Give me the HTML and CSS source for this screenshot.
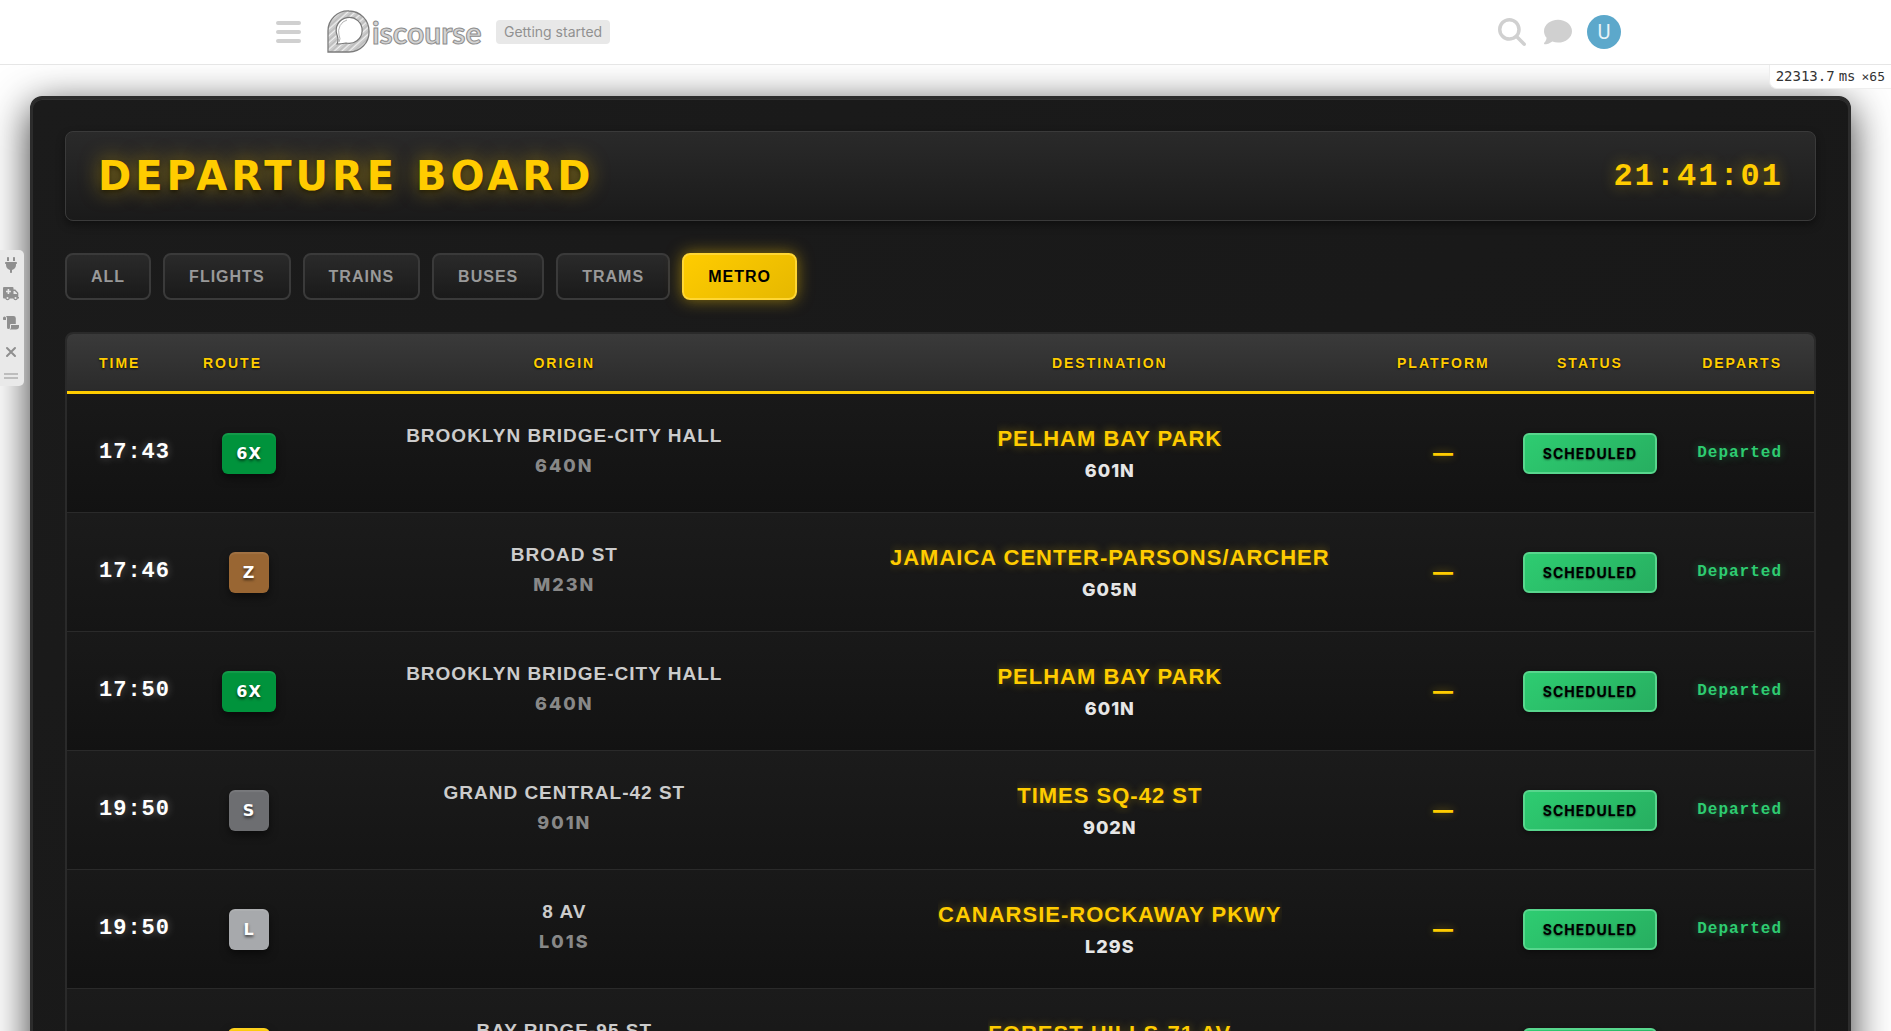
FILE: index.html
```html
<!DOCTYPE html>
<html lang="en">
<head>
<meta charset="utf-8">
<title>Departure Board</title>
<link rel="stylesheet" href="styles.css">
</head>
<body>
<header class="site-header">
  <div class="site-header-inner">
    <button class="icon-button menu-button" aria-label="Menu">
      <svg width="25" height="22" viewBox="0 0 25 22"><path d="M2 2h21M2 11h21M2 20h21" stroke="currentColor" stroke-width="4" stroke-linecap="round"/></svg>
    </button>
    <a class="logo" href="#" aria-label="Discourse">
      <svg width="156" height="44" viewBox="0 0 156 44">
        <defs>
          <pattern id="hatch" width="5" height="5" patternUnits="userSpaceOnUse" patternTransform="rotate(48)">
            <rect width="5" height="5" fill="#cbcbcb"/><rect width="1" height="5" fill="#f0f0f0"/><rect x="3" width="1" height="5" fill="#bababa"/>
          </pattern>
        </defs>
        <path d="M1 42V21A20 20 0 0 1 22 1A20 20 0 0 1 42 21A20 20 0 0 1 22 42Z" fill="url(#hatch)" stroke="#7b7b7b" stroke-width="1.3"/>
        <path d="M10 34Q12 30 10 25A13 13 0 1 1 19 33Q14 34 10 34Z" fill="#fff" stroke="#777" stroke-width="1.2"/>
        <path d="M12 32Q14 29 12 25A11 12 0 0 1 20 10" fill="none" stroke="#b5b5b5" stroke-width="1"/>
        <text x="45" y="34" class="logo-text">iscourse</text>
      </svg>
    </a>
    <a class="topic-tag" href="#">Getting started</a>
    <nav class="header-icons">
      <button class="icon-button" aria-label="Search">
        <svg width="28" height="28" viewBox="0 0 512 512"><path fill="currentColor" d="M416 208c0 45.9-14.9 88.3-40 122.7L502.6 457.4c12.5 12.5 12.5 32.8 0 45.3s-32.8 12.5-45.3 0L330.7 376c-34.4 25.2-76.8 40-122.7 40C93.1 416 0 322.9 0 208S93.1 0 208 0S416 93.1 416 208zM208 352a144 144 0 1 0 0-288 144 144 0 1 0 0 288z"/></svg>
      </button>
      <button class="icon-button" aria-label="Chat">
        <svg width="28" height="28" viewBox="0 0 512 512"><path fill="currentColor" d="M512 240c0 114.9-114.6 208-256 208c-37.1 0-72.3-6.4-104.1-17.9c-11.9 8.7-31.3 20.6-54.3 30.6C73.6 471.1 44.7 480 16 480c-6.5 0-12.3-3.9-14.8-9.9c-2.5-6-1.1-12.8 3.4-17.4l.3-.3c.3-.3 .7-.7 1.3-1.4c1.1-1.2 2.8-3.1 4.9-5.7c4.1-5 9.6-12.4 15.2-21.6c10-16.6 19.5-38.4 21.4-62.9C17.7 326.8 0 285.1 0 240C0 125.1 114.6 32 256 32s256 93.1 256 208z"/></svg>
      </button>
      <button class="avatar">U</button>
    </nav>
  </div>
</header>

<aside class="profiler"><span>22313.7</span><span class="profiler-unit">ms</span><span class="profiler-count">×65</span></aside>

<aside class="dev-tools">
  <button class="tool" aria-label="Plugins"><svg width="12" height="16" viewBox="0 0 384 512"><path fill="currentColor" d="M96 0C78.3 0 64 14.3 64 32v96h64V32c0-17.7-14.3-32-32-32zM288 0c-17.7 0-32 14.3-32 32v96h64V32c0-17.7-14.3-32-32-32zM32 160c-17.7 0-32 14.3-32 32s14.3 32 32 32v32c0 77.4 55 142 128 156.8V480c0 17.7 14.3 32 32 32s32-14.3 32-32V412.8C297 398 352 333.4 352 256V224c17.7 0 32-14.3 32-32s-14.3-32-32-32H32z"/></svg></button>
  <button class="tool" aria-label="Safe mode"><svg width="16" height="14" viewBox="0 0 16 14"><path fill="currentColor" fill-rule="evenodd" d="M1 0h8.5a1 1 0 0 1 1 1v1.5h1.8l3 3.2V10H16v1.5h-1.2a2.3 2.3 0 0 1-4.5 0H6.8a2.3 2.3 0 0 1-4.5 0H1a1 1 0 0 1-1-1V1a1 1 0 0 1 1-1zM4.6 2v1.7H3v1.6h1.6V7h1.6V5.300h1.700V3.700H6.200V2zM10.500 4v3h3.500V6.200L11.700 4zM4.500 10a1 1 0 1 0 .01 2 1 1 0 0 0 0-2zM12.500 10a1 1 0 1 0 .01 2 1 1 0 0 0 0-2z"/></svg></button>
  <button class="tool" aria-label="Verbose log"><svg width="16" height="14" viewBox="0 0 16 14"><path fill="currentColor" d="M0 2a1.500 1.500 0 0 1 3 0v2H.7Q0 4 0 3.300zM3 0h7.500a2.300 2.300 0 0 1 2.300 2.300V8H8a1 1 0 0 0-1 1v2.500a1.500 1.500 0 0 1-3 0V2.500Q4 1 3 0zM8 9h8v1.300A3 3 0 0 1 13 13.500H6.500Q8 13 8 11.500z"/></svg></button>
  <button class="tool" aria-label="Close"><svg width="12" height="12" viewBox="0 0 12 12"><path d="M2 2l8 8M10 2l-8 8" stroke="currentColor" stroke-width="2" stroke-linecap="round"/></svg></button>
  <div class="grip"></div>
</aside>

<main class="board">
  <section class="board-head">
    <h1 class="board-title">DEPARTURE BOARD</h1>
    <time class="clock">21:41:01</time>
  </section>

  <nav class="filters">
    <button class="filter">ALL</button>
    <button class="filter">FLIGHTS</button>
    <button class="filter">TRAINS</button>
    <button class="filter">BUSES</button>
    <button class="filter">TRAMS</button>
    <button class="filter filter-active">METRO</button>
  </nav>

  <div class="table-frame">
    <table class="departures">
      <colgroup><col class="col-time"><col class="col-route"><col class="col-origin"><col><col class="col-platform"><col class="col-status"><col class="col-departs"></colgroup>
      <thead>
        <tr><th class="time">TIME</th><th class="route-head">ROUTE</th><th>ORIGIN</th><th class="destination">DESTINATION</th><th>PLATFORM</th><th>STATUS</th><th class="departs">DEPARTS</th></tr>
      </thead>
      <tbody>
        <tr>
          <td class="time">17:43</td><td><span class="badge line-green">6X</span></td>
          <td><div class="stop"><span class="stop-name">BROOKLYN BRIDGE-CITY HALL</span><span class="stop-code">640N</span></div></td>
          <td class="destination"><div class="stop"><span class="stop-name">PELHAM BAY PARK</span><span class="stop-code">601N</span></div></td>
          <td class="platform">—</td><td class="status-cell"><span class="status">SCHEDULED</span></td><td class="departs">Departed</td>
        </tr>
        <tr>
          <td class="time">17:46</td><td><span class="badge line-brown">Z</span></td>
          <td><div class="stop"><span class="stop-name">BROAD ST</span><span class="stop-code">M23N</span></div></td>
          <td class="destination"><div class="stop"><span class="stop-name">JAMAICA CENTER-PARSONS/ARCHER</span><span class="stop-code">G05N</span></div></td>
          <td class="platform">—</td><td class="status-cell"><span class="status">SCHEDULED</span></td><td class="departs">Departed</td>
        </tr>
        <tr>
          <td class="time">17:50</td><td><span class="badge line-green">6X</span></td>
          <td><div class="stop"><span class="stop-name">BROOKLYN BRIDGE-CITY HALL</span><span class="stop-code">640N</span></div></td>
          <td class="destination"><div class="stop"><span class="stop-name">PELHAM BAY PARK</span><span class="stop-code">601N</span></div></td>
          <td class="platform">—</td><td class="status-cell"><span class="status">SCHEDULED</span></td><td class="departs">Departed</td>
        </tr>
        <tr>
          <td class="time">19:50</td><td><span class="badge line-dark">S</span></td>
          <td><div class="stop"><span class="stop-name">GRAND CENTRAL-42 ST</span><span class="stop-code">901N</span></div></td>
          <td class="destination"><div class="stop"><span class="stop-name">TIMES SQ-42 ST</span><span class="stop-code">902N</span></div></td>
          <td class="platform">—</td><td class="status-cell"><span class="status">SCHEDULED</span></td><td class="departs">Departed</td>
        </tr>
        <tr>
          <td class="time">19:50</td><td><span class="badge line-light">L</span></td>
          <td><div class="stop"><span class="stop-name">8 AV</span><span class="stop-code">L01S</span></div></td>
          <td class="destination"><div class="stop"><span class="stop-name">CANARSIE-ROCKAWAY PKWY</span><span class="stop-code">L29S</span></div></td>
          <td class="platform">—</td><td class="status-cell"><span class="status">SCHEDULED</span></td><td class="departs">Departed</td>
        </tr>
        <tr>
          <td class="time">19:50</td><td><span class="badge line-yellow">R</span></td>
          <td><div class="stop"><span class="stop-name">BAY RIDGE-95 ST</span><span class="stop-code">R45N</span></div></td>
          <td class="destination"><div class="stop"><span class="stop-name">FOREST HILLS-71 AV</span><span class="stop-code">G08N</span></div></td>
          <td class="platform">—</td><td class="status-cell"><span class="status">SCHEDULED</span></td><td class="departs">Departed</td>
        </tr>
      </tbody>
    </table>
  </div>
</main>
</body>
</html>
```
FILE: styles.css
```css
* { box-sizing: border-box; }

body {
  margin: 0;
  background: #fff;
  font-family: "Liberation Sans", Arial, sans-serif;
}

button { font: inherit; cursor: pointer; }
svg { display: block; }

/* Site header */
.site-header {
  position: relative;
  z-index: 2;
  height: 65px;
  background: #fff;
  border-bottom: 1px solid #e6e6e6;
}
.site-header-inner {
  display: flex;
  align-items: center;
  max-width: 1351px;
  height: 64px;
  margin: 0 auto;
  padding-left: 6px;
}
.icon-button {
  padding: 0;
  border: 0;
  background: none;
  color: #d0d0d0;
}
.logo { margin-left: 26px; }
.logo-text {
  font: 700 30px Lato, sans-serif;
  fill: #d4d4d4;
  stroke: #8d8d8d;
  stroke-width: 1px;
}
.topic-tag {
  margin-left: 13px;
  padding: 0 8px;
  border-radius: 4px;
  background: #e8e8e8;
  color: #919191;
  font: 14px/24px Inter, sans-serif;
  text-decoration: none;
}
.header-icons {
  display: flex;
  align-items: center;
  gap: 18px;
  margin-left: auto;
}
.avatar {
  width: 34px;
  height: 34px;
  margin-left: -3px;
  padding: 0;
  border: 0;
  border-radius: 50%;
  background: #5ca8cb;
  color: #e8f3f8;
  font: 20px/34px Roboto, sans-serif;
}

/* Request timing readout */
.profiler {
  position: absolute;
  top: 65px;
  right: 0;
  z-index: 3;
  display: flex;
  align-items: baseline;
  gap: 4px;
  padding: 0 6px;
  border: 1px solid #eee;
  border-width: 0 0 1px 1px;
  border-bottom-left-radius: 8px;
  background: #fff;
  color: #333;
  font: 14px/22px "DejaVu Sans Mono", monospace;
}
.profiler-count { font-size: 13px; margin-left: 2px; }

/* Developer toolbar pinned to the left edge */
.dev-tools {
  position: fixed;
  top: 250px;
  left: 0;
  z-index: 3;
  display: flex;
  flex-direction: column;
  align-items: center;
  width: 24px;
  padding: 0 2px 7px 0;
  border-radius: 0 5px 5px 0;
  background: #e9e9e9;
  color: #8f8f8f;
}
.tool {
  display: grid;
  place-items: center;
  width: 22px;
  height: 29px;
  padding: 0;
  border: 0;
  background: none;
  color: inherit;
}
.grip {
  width: 14px;
  height: 6px;
  margin-top: 7px;
  border: 2px solid #bdbdbd;
  border-width: 2px 0;
}

/* Departure board */
.board {
  margin: 31px 40px 32px 30px;
  padding: 32px;
  border: 3px solid #2c2c2c;
  border-radius: 12px;
  background: linear-gradient(145deg, #1b1b1b, #171717);
  box-shadow: 0 10px 40px rgba(0, 0, 0, .8), inset 0 1px 0 #333;
}
.board-head {
  display: flex;
  align-items: flex-end;
  justify-content: space-between;
  padding: 20px 32px;
  border: 1px solid #3a3a3a;
  border-radius: 8px;
  background: linear-gradient(180deg, #2a2a2a, #1a1a1a);
  box-shadow: 0 4px 8px rgba(0, 0, 0, .4);
}
.board-title {
  margin: 0;
  color: #fc0;
  font: 700 40px/48px "DejaVu Sans", sans-serif;
  letter-spacing: 4px;
  text-shadow: 0 0 20px rgba(255, 204, 0, .5), 0 2px 4px rgba(0, 0, 0, .8);
}
.clock {
  color: #fc0;
  font: 700 32px/46px "Liberation Mono", monospace;
  letter-spacing: 2px;
  text-shadow: 0 0 15px rgba(255, 204, 0, .4);
}

.filters {
  display: flex;
  gap: 12px;
  margin: 32px 0;
}
.filter {
  padding: 12px 24px;
  border: 2px solid #3a3a3a;
  border-radius: 8px;
  background: linear-gradient(180deg, #2a2a2a, #1a1a1a);
  color: #999;
  font-weight: 700;
  font-size: 16px;
  line-height: 19px;
  letter-spacing: 1px;
}
.filter-active {
  border-color: #ffd633;
  background: linear-gradient(145deg, #fc0, #e6b800);
  color: #000;
  box-shadow: 0 0 16px rgba(255, 204, 0, .5);
}

/* Table */
.table-frame {
  overflow: hidden;
  border: 2px solid #2a2a2a;
  border-radius: 8px;
}
.departures {
  width: 100%;
  table-layout: fixed;
  border-spacing: 0;
}
.col-time { width: 120px; }
.col-route, .col-platform { width: 124px; }
.col-origin { width: 29%; }
.col-status { width: 170px; }
.col-departs { width: 139px; }

th, td {
  padding: 0 16px;
  text-align: center;
  white-space: nowrap;
}
thead { background: linear-gradient(180deg, #3a3a3a, #2a2a2a); }
th {
  height: 60px;
  border-bottom: 3px solid #fc0;
  color: #fc0;
  font-size: 14px;
  letter-spacing: 2px;
  text-shadow: 0 1px 2px rgba(0, 0, 0, .8);
}
td {
  height: 119px;
  border-bottom: 1px solid #2a2a2a;
}
tbody tr:nth-child(odd) { background: linear-gradient(180deg, #191919, #121212); }
tbody tr:nth-child(even) { background: linear-gradient(180deg, #1b1b1b, #151515); }

.time { padding-left: 32px; padding-right: 0; text-align: left; }
.route-head { text-align: left; }
.destination { padding-left: 37px; }
.departs { padding-left: 0; padding-right: 32px; text-align: right; }

td.time {
  color: #fff;
  font: 700 22px/28px "Liberation Mono", monospace;
  letter-spacing: 1px;
  text-shadow: 0 0 8px rgba(255, 255, 255, .3);
}
.badge {
  display: inline-block;
  padding: 10px 14px;
  border-radius: 6px;
  color: #fff;
  font: 700 16px/21px "DejaVu Sans", sans-serif;
  letter-spacing: 1px;
  text-shadow: 0 2px 3px rgba(0, 0, 0, .6);
  box-shadow: 0 4px 8px rgba(0, 0, 0, .5), inset 0 2px 1px rgba(255, 255, 255, .08);
}
.line-green { background: #00933c; }
.line-brown { background: #996633; }
.line-dark { background: #6d6e71; }
.line-light { background: #a7a9ac; }
.line-yellow { background: #fccc0a; }

.stop {
  display: flex;
  flex-direction: column;
  align-items: center;
}
.stop-name {
  overflow: hidden;
  color: #ccc;
  font-weight: 700;
  font-size: 19px;
  line-height: 26px;
  letter-spacing: 1px;
}
.stop-code {
  color: #888;
  font: 800 18px/34px Inter, sans-serif;
  letter-spacing: 2px;
}
.destination .stop-name {
  color: #fc0;
  font-size: 22px;
  line-height: 36px;
  text-shadow: 0 0 10px rgba(255, 204, 0, .4);
}
.destination .stop-code {
  color: #e6e6e6;
  line-height: 28px;
  letter-spacing: 1px;
}
.platform {
  color: #fc0;
  font: 800 20px/22px Inter, sans-serif;
  text-shadow: 0 0 8px rgba(255, 204, 0, .4);
}
.status {
  display: inline-block;
  padding: 8px 18px;
  border: 2px solid #58d68d;
  border-radius: 6px;
  background: linear-gradient(145deg, #2ecc71, #27ae60);
  color: #000;
  font: 700 14px/21px Inter, sans-serif;
  letter-spacing: 1px;
  text-shadow: 0 1px 2px rgba(0, 0, 0, .5);
  box-shadow: 0 2px 6px rgba(0, 0, 0, .4);
}
.status-cell { padding: 0; }
td.departs {
  color: #2ecc71;
  font: 700 16px/22px "Liberation Mono", monospace;
  letter-spacing: 1px;
  text-shadow: 0 0 8px rgba(46, 204, 113, .4);
}
```
